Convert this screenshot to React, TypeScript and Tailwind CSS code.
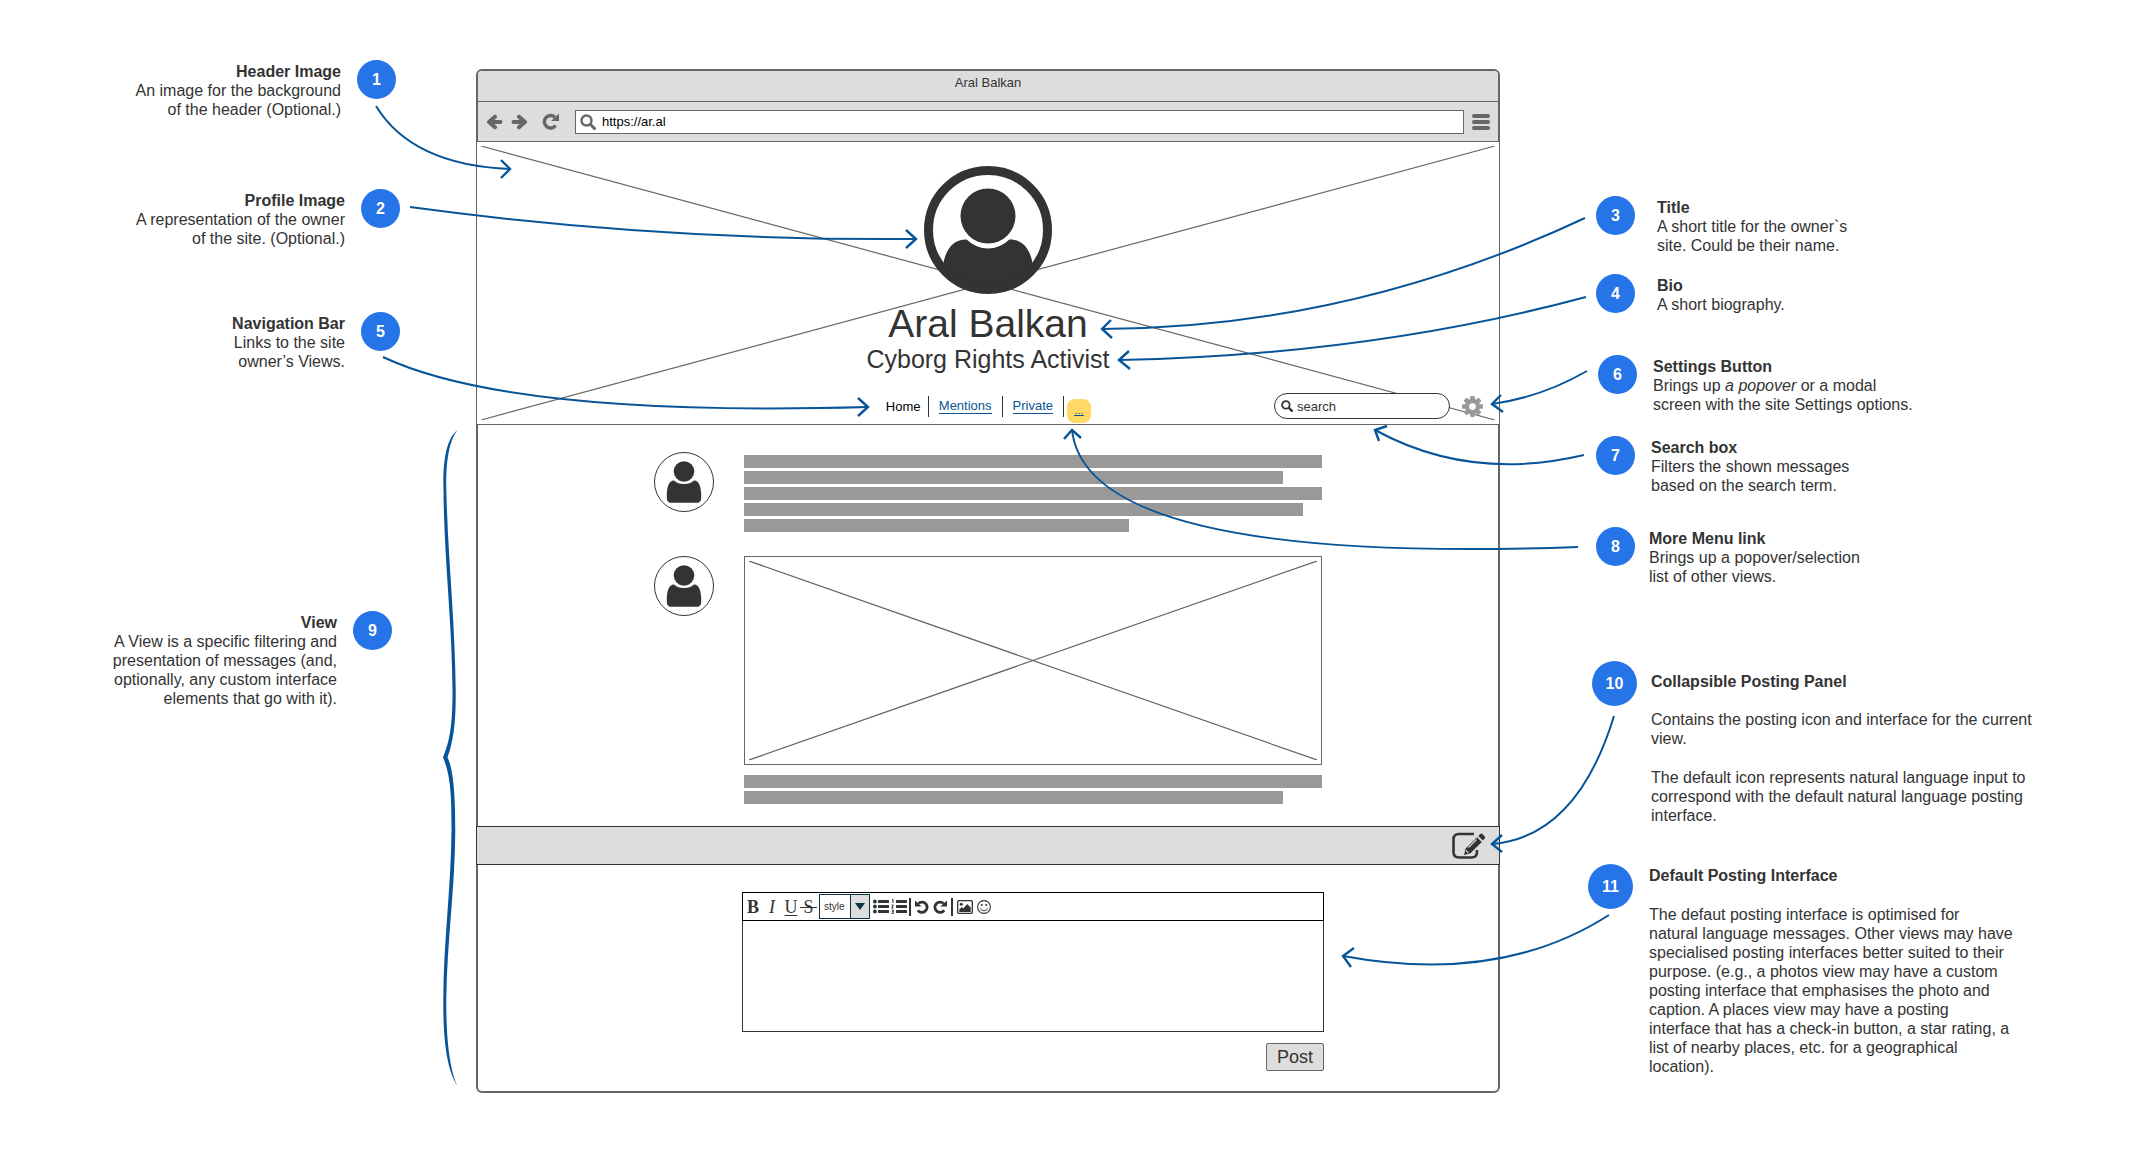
import type { ReactNode } from "react";

type NoteProps = {
  n: number;
  title: string;
  side: "left" | "right";
  className: string;
  large?: boolean;
  textClass?: string;
  children: ReactNode;
};

function Note({ n, title, side, className, large, textClass = "pt-0.5", children }: NoteProps) {
  return (
    <section className={`flex items-start ${side === "left" ? "flex-row-reverse text-right" : ""} ${className}`}>
      <span
        className={`flex shrink-0 items-center justify-center rounded-full bg-[#2574e8] font-bold text-white ${
          large ? "size-[45px]" : "size-[39px]"
        }`}
      >
        {n}
      </span>
      <div className={`whitespace-nowrap ${textClass}`}>
        <h2 className="font-bold">{title}</h2>
        {children}
      </div>
    </section>
  );
}

function Cross() {
  return (
    <svg className="absolute inset-1 h-[calc(100%-8px)] w-[calc(100%-8px)]" stroke="#666" strokeWidth="1.2" aria-hidden="true">
      <line x1="0" y1="0" x2="100%" y2="100%" />
      <line x1="0" y1="100%" x2="100%" y2="0" />
    </svg>
  );
}

function Avatar() {
  return (
    <span className="flex size-[60px] shrink-0 items-center justify-center rounded-full border border-[#333] bg-white">
      <svg className="h-[42px] w-[36px]" viewBox="0 0 36 42" fill="#333" aria-hidden="true">
        <circle cx="18" cy="10.500" r="10.300" />
        <path d="M8 19.500c2.500 2.300 5.800 3.600 10 3.600s7.500-1.300 10-3.600c5.500 0 7.200 8 7.200 14.500v3c0 3-1.500 4.700-4 4.700H4.800c-2.500 0-4-1.700-4-4.700v-3c0-6.500 1.700-14.500 7.200-14.500z" />
      </svg>
    </span>
  );
}

function Bars({ widths }: { widths: string[] }) {
  return (
    <div className="flex flex-col gap-[3px]">
      {widths.map((w, i) => (
        <div key={i} className="h-[13px] bg-[#999]" style={{ width: w }} />
      ))}
    </div>
  );
}

function ArrowIcon({ flip }: { flip?: boolean }) {
  return (
    <svg className={`h-4 w-[17px] ${flip ? "-scale-x-100" : ""}`} viewBox="0 0 17 16" fill="none" stroke="#666" strokeWidth="4" strokeLinecap="round" strokeLinejoin="round" aria-hidden="true">
      <path d="M4 8h10.500M9 2.700L3 8l6 5.300" />
    </svg>
  );
}

function RotateIcon({ className, flip, color }: { className: string; flip?: boolean; color: string }) {
  return (
    <svg className={`${className} ${flip ? "-scale-x-100" : ""}`} viewBox="0 0 16 16" fill="none" aria-hidden="true">
      <path d="M12.200 4A5.900 5.900 0 1 0 12.800 11.800" stroke={color} strokeWidth="3.200" />
      <path d="M16 .5v7H8.500z" fill={color} />
    </svg>
  );
}

function SearchIcon({ className, color }: { className: string; color: string }) {
  return (
    <svg className={className} viewBox="0 0 16 16" fill="none" stroke={color} aria-hidden="true">
      <circle cx="6.500" cy="6.500" r="5" strokeWidth="2.400" />
      <path d="M10.500 10.500l4 4" strokeWidth="3" strokeLinecap="round" />
    </svg>
  );
}

function Gear() {
  return (
    <svg className="size-[21px]" viewBox="0 0 20 20" aria-hidden="true">
      <g fill="#999">
        {[0, 45, 90, 135].map((a) => (
          <rect key={a} x="7.800" y="0" width="4.400" height="20" rx="1" transform={`rotate(${a} 10 10)`} />
        ))}
        <circle cx="10" cy="10" r="7.300" />
      </g>
      <circle cx="10" cy="10" r="3.200" fill="#fff" />
    </svg>
  );
}

const arrows = [
  ["M376 106Q412 165 510 169", "M501 160L510 169L501 178"],
  ["M410 207Q660 241 916 239", "M906 230L916 239L906 248"],
  ["M383 357Q510 417 868 407", "M858 398L868 407L858 416"],
  ["M1585 218Q1350 328 1102 329", "M1111 320L1102 329L1112 338"],
  ["M1586 297Q1370 355 1119 360", "M1129 351L1119 360L1130 369"],
  ["M1587 371Q1542 397 1492 404", "M1501 395L1492 404L1503 412"],
  ["M1584 455Q1470 482 1375 430", "M1387 426L1375 430L1379 441"],
  ["M1578 547Q1087 565 1072 430", "M1064 439L1072 430L1081 438"],
  ["M1614 716Q1577 837 1492 844", "M1502 835L1492 844L1502 852"],
  ["M1609 915Q1500 985 1343 956", "M1354 948L1343 956L1351 967"],
];

function Connectors() {
  return (
    <svg className="pointer-events-none absolute inset-0 size-full" viewBox="0 0 2136 1159" preserveAspectRatio="none" fill="none" aria-hidden="true">
      {arrows.map(([line, head]) => (
        <g key={line} stroke="#075598" strokeWidth="2">
          <path d={line} />
          <path d={head} strokeWidth="2.400" />
        </g>
      ))}
      <path
        fill="#075598"
        d="M457.500 430C443 441 443 475 443.500 490C444 560 452 620 452.500 690C452.500 725 450 740 443 757.500C451 775 451.500 800 451.500 830C451 890 443.500 940 443.300 1000C443 1050 449 1073 457.500 1086C451 1073 446 1045 446.300 1000C447 940 455 890 455.300 830C455.300 800 454 770 447.500 757.500C453 742 456 725 455.700 690C455 620 448 560 446.300 490C446 465 448 442 457.500 430Z"
      />
    </svg>
  );
}

const links = ["Mentions", "Private"];

function SiteHeader() {
  return (
    <header className="relative -mx-0.5 flex flex-col items-center border-x border-b border-[#666] bg-white pb-px pt-6">
      <Cross />
      <svg className="relative size-32" viewBox="0 0 128 128" role="img" aria-label="Profile">
        <defs>
          <clipPath id="disc">
            <circle cx="64" cy="64" r="60" />
          </clipPath>
        </defs>
        <circle cx="64" cy="64" r="60" fill="#fff" />
        <g clipPath="url(#disc)" fill="#333">
          <path d="M19 100C21 84 29 73 42.700 73.500Q52 82.500 64 82.500T85.300 73.500C99 73 107 84 109 100V128H19Z" />
          <circle cx="64" cy="50" r="27.500" />
        </g>
        <circle cx="64" cy="64" r="59.500" fill="none" stroke="#333" strokeWidth="9" />
      </svg>
      <h1 className="relative mt-2 text-[39px] leading-[44px]">Aral Balkan</h1>
      <p className="relative text-[25px] leading-[26px]">Cyborg Rights Activist</p>
      <div className="relative mt-[21px] flex h-[30px] w-full items-start text-[13px]">
        <nav className="ml-[40%] flex h-full items-start text-black">
          <a href="#home" className="mt-[3px] flex h-[21px] w-[43px] items-center border-r border-[#333]">
            Home
          </a>
          {links.map((l) => (
            <a key={l} href={`#${l}`} className="mt-[3px] flex h-[21px] items-center border-r border-[#333] px-2.5 text-[#075598]">
              <span className="border-b border-[#075598] leading-[14px]">{l}</span>
            </a>
          ))}
          <a href="#more" aria-label="More" className="ml-[3px] flex size-6 items-center justify-center self-end rounded-lg bg-[#ffd966] text-[#075598]">
            <span className="border-b border-[#075598] text-[11px] leading-[9px]">...</span>
          </a>
        </nav>
        <label className="ml-auto flex h-[26px] w-[176px] items-center gap-1 rounded-full border border-[#333] bg-white px-1.5">
          <SearchIcon className="size-3 shrink-0" color="#333" />
          <input type="text" aria-label="Search" defaultValue="search" className="w-full min-w-0 bg-transparent outline-none" />
        </label>
        <button type="button" aria-label="Settings" className="ml-3 mr-4 mt-[3px]">
          <Gear />
        </button>
      </div>
    </header>
  );
}

function ListIcon({ numbered }: { numbered?: boolean }) {
  return (
    <svg className="h-[15px] w-4" viewBox="0 0 16 15" fill="#333" aria-hidden="true">
      {[1, 6, 11].map((y) => (
        <rect key={y} x="5" y={y} width="11" height="3" rx=".5" />
      ))}
      {numbered ? (
        <path d="M1 1l1-.7V4M.7 6h1.600l-1.500 3h1.700M.7 11h1.500v3.500H.7M1 12.700h1.200" fill="none" stroke="#333" />
      ) : (
        [2.500, 7.500, 12.500].map((y) => <circle key={y} cx="1.900" cy={y} r="1.900" />)
      )}
    </svg>
  );
}

function Editor() {
  return (
    <div className="border border-[#333]">
      <div className="-mx-px -mt-px flex h-[29px] items-center border border-black pl-[3px] pr-2">
        <div className="flex gap-0.5 font-['Liberation_Serif'] text-[18px] leading-none">
          <button type="button" aria-label="Bold" className="w-[14px] font-bold">B</button>
          <button type="button" aria-label="Italic" className="w-5 italic">I</button>
          <button type="button" aria-label="Underline" className="w-[14px] underline underline-offset-2">U</button>
          <button type="button" aria-label="Strikethrough" className="relative w-[17px]">
            S
            <span className="absolute inset-x-0 top-1/2 h-px bg-[#333]" />
          </button>
        </div>
        <div className="relative ml-0.5 flex">
          <select aria-label="Style" className="h-[25px] w-[51px] appearance-none border border-[#073642] pl-1 text-[10px] outline-none">
            <option>style</option>
          </select>
          <span className="pointer-events-none absolute inset-y-0 right-0 flex w-5 items-center justify-center border border-[#073642] bg-[#ddd]">
            <svg className="h-[7px] w-[10px]" viewBox="0 0 10 7" fill="#073642" aria-hidden="true">
              <path d="M0 0h10L5 7z" />
            </svg>
          </span>
        </div>
        <div className="ml-[3px] flex items-center gap-0.5">
          <button type="button" aria-label="Bulleted list"><ListIcon /></button>
          <button type="button" aria-label="Numbered list"><ListIcon numbered /></button>
          <span className="h-[18px] w-0.5 bg-[#333]" />
          <button type="button" aria-label="Undo" className="ml-0.5"><RotateIcon className="size-[14px]" flip color="#333" /></button>
          <button type="button" aria-label="Redo" className="ml-0.5"><RotateIcon className="size-[14px]" color="#333" /></button>
          <span className="ml-0.5 h-[18px] w-0.5 bg-[#333]" />
          <button type="button" aria-label="Image" className="ml-0.5">
            <svg className="h-[14px] w-4" viewBox="0 0 16 14" fill="#333" aria-hidden="true">
              <rect x=".7" y=".7" width="14.600" height="12.600" rx="1" fill="none" stroke="#333" strokeWidth="1.300" />
              <circle cx="4.300" cy="4.300" r="1.500" />
              <path d="M2.300 12V9.500l2.500-2.500 1.500 1.500 4-4.500 3.400 3.500V12z" />
            </svg>
          </button>
          <button type="button" aria-label="Emoji" className="ml-0.5">
            <svg className="size-[14px]" viewBox="0 0 14 14" fill="none" stroke="#333" aria-hidden="true">
              <circle cx="7" cy="7" r="6.400" strokeWidth="1.100" />
              <path d="M3.500 8.200c.7 3.300 6.300 3.300 7 0" />
              <g fill="#333" stroke="none">
                <circle cx="4.800" cy="5" r="1" />
                <circle cx="9.200" cy="5" r="1" />
              </g>
            </svg>
          </button>
        </div>
      </div>
      <textarea aria-label="Message" className="block h-[110px] w-full resize-none p-2 outline-none" />
    </div>
  );
}

function BrowserWindow() {
  return (
    <main className="mt-[69px] self-start rounded-md border-2 border-[#666] bg-white">
      <div className="rounded-t bg-[#ddd]">
        <div className="flex h-[31px] items-center justify-center border-b border-[#666] pb-2 text-[13px]">Aral Balkan</div>
        <div className="flex h-10 items-center border-b border-[#666] pl-2 pr-2">
          <button type="button" aria-label="Back"><ArrowIcon /></button>
          <button type="button" aria-label="Forward" className="ml-2"><ArrowIcon flip /></button>
          <button type="button" aria-label="Reload" className="ml-[14px]"><RotateIcon className="size-[17px]" color="#666" /></button>
          <label className="ml-4 flex h-6 flex-1 items-center gap-1.5 border border-[#666] bg-white px-1 text-[13px]">
            <SearchIcon className="size-4 shrink-0" color="#666" />
            <input type="text" aria-label="Address" defaultValue="https://ar.al" className="w-full bg-transparent text-black outline-none" />
          </label>
          <button type="button" aria-label="Menu" className="ml-2 flex w-[18px] flex-col gap-0.5">
            <span className="h-1 w-full rounded-full bg-[#666]" />
            <span className="h-1 w-full rounded-full bg-[#666]" />
            <span className="h-1 w-full rounded-full bg-[#666]" />
          </button>
        </div>
      </div>
      <SiteHeader />
      <div className="mx-auto flex max-w-[668px] flex-col gap-6 pb-[22px] pt-[27px]">
        <article className="flex gap-[30px]">
          <Avatar />
          <div className="flex-1 pt-[3px]">
            <Bars widths={["100%", "93.2%", "100%", "96.7%", "66.6%"]} />
          </div>
        </article>
        <article className="flex gap-[30px]">
          <Avatar />
          <div className="flex-1">
            <div className="relative mb-2.5 h-[209px] border border-[#666]">
              <Cross />
            </div>
            <Bars widths={["100%", "93.2%"]} />
          </div>
        </article>
      </div>
      <div className="-mx-0.5 flex h-[39px] items-center justify-end border border-[#333] bg-[#ddd] pr-[14px]">
        <button type="button" aria-label="Toggle posting panel">
          <svg className="h-[27px] w-[33px]" viewBox="0 0 33 27" fill="none" stroke="#333" aria-hidden="true">
            <path d="M22 2H7Q1.500 2 1.500 7.500V20Q1.500 25.500 7 25.500H19.500Q25 25.500 25 20V18" strokeWidth="2.600" />
            <path d="M12 23l1.700-6.500L25 5.200l4.800 4.800L18.500 21.300z" fill="#333" stroke="none" />
            <path d="M26.300 4l1.800-1.800q1.200-1.200 2.500 0l2 2q1.200 1.200 0 2.500L30.900 8.500z" fill="#333" stroke="none" />
            <path d="M16.500 15.500l8-8M14 18.500l2.300 2.300" stroke="#ddd" strokeWidth="1.100" />
          </svg>
        </button>
      </div>
      <form className="mx-auto flex max-w-[672px] flex-col pb-5 pl-[90px] pt-[27px]" onSubmit={(e) => e.preventDefault()}>
        <Editor />
        <button type="submit" className="mt-[11px] h-7 w-[58px] self-end rounded-xs border border-[#666] bg-[#ddd] text-[18px] leading-none">
          Post
        </button>
      </form>
    </main>
  );
}

export default function App() {
  return (
    <div className="relative grid min-h-screen grid-cols-[476fr_1024fr_636fr] bg-white pb-[65px] font-['Liberation_Sans',Arial,sans-serif] text-[16px] leading-[19px] text-[#333]">
      <aside className="flex flex-col pt-[60px]">
        <Note n={1} title="Header Image" side="left" className="gap-4 pr-20">
          <p>An image for the background<br />of the header (Optional.)</p>
        </Note>
        <Note n={2} title="Profile Image" side="left" className="mt-[70px] gap-4 pr-19">
          <p>A representation of the owner<br />of the site. (Optional.)</p>
        </Note>
        <Note n={5} title="Navigation Bar" side="left" className="mt-16 gap-4 pr-19">
          <p>Links to the site<br />owner’s Views.</p>
        </Note>
        <Note n={9} title="View" side="left" className="mt-60 gap-4 pr-21">
          <p>
            A View is a specific filtering and<br />presentation of messages (and,<br />
            optionally, any custom interface<br />elements that go with it).
          </p>
        </Note>
      </aside>
      <BrowserWindow />
      <aside className="flex flex-col pt-[196px]">
        <Note n={3} title="Title" side="right" className="gap-[22px] pl-24">
          <p>A short title for the owner`s<br />site. Could be their name.</p>
        </Note>
        <Note n={4} title="Bio" side="right" className="mt-[19px] gap-[22px] pl-24">
          <p>A short biography.</p>
        </Note>
        <Note n={6} title="Settings Button" side="right" className="mt-[41px] gap-4 pl-[98px]">
          <p>Brings up <em>a popover</em> or a modal<br />screen with the site Settings options.</p>
        </Note>
        <Note n={7} title="Search box" side="right" className="mt-[22px] gap-4 pl-24">
          <p>Filters the shown messages<br />based on the search term.</p>
        </Note>
        <Note n={8} title="More Menu link" side="right" className="mt-8 gap-[14px] pl-24">
          <p>Brings up a popover/selection<br />list of other views.</p>
        </Note>
        <Note n={10} title="Collapsible Posting Panel" side="right" large className="mt-[75px] gap-[14px] pl-23" textClass="pt-[11px]">
          <p className="mt-[19px]">Contains the posting icon and interface for the current<br />view.</p>
          <p className="mt-5">
            The default icon represents natural language input to<br />correspond with the default natural language posting<br />interface.
          </p>
        </Note>
        <Note n={11} title="Default Posting Interface" side="right" large className="mt-[39px] gap-4 pl-22">
          <p className="mt-5">
            The defaut posting interface is optimised for<br />natural language messages. Other views may have<br />
            specialised posting interfaces better suited to their<br />purpose. (e.g., a photos view may have a custom<br />
            posting interface that emphasises the photo and<br />caption. A places view may have a posting<br />
            interface that has a check-in button, a star rating, a<br />list of nearby places, etc. for a geographical<br />location).
          </p>
        </Note>
      </aside>
      <Connectors />
    </div>
  );
}
